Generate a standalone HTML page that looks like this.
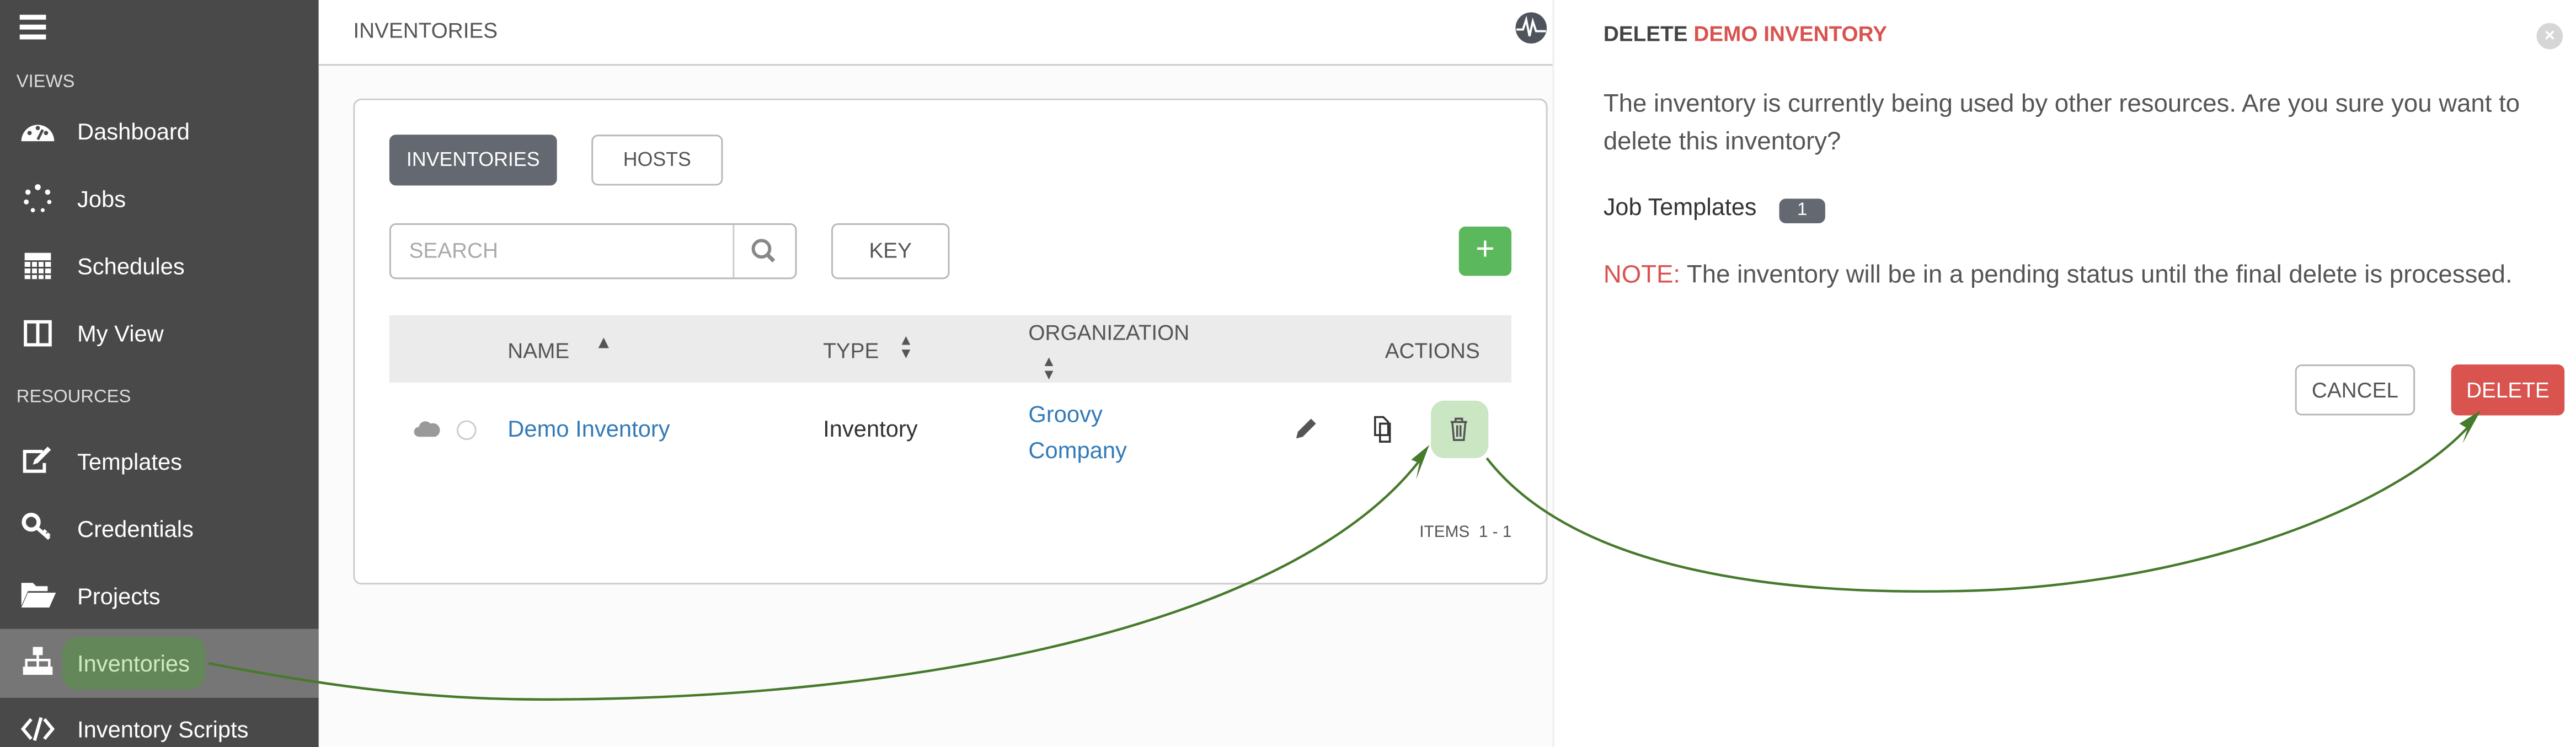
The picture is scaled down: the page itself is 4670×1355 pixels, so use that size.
<!DOCTYPE html>
<html><head><meta charset="utf-8"><style>
*{margin:0;padding:0;box-sizing:border-box}
html,body{width:4670px;height:1354px;overflow:hidden;background:#fff}
#w{position:absolute;left:0;top:0;width:1568px;height:455px;transform:scale(2.97832);transform-origin:0 0;font-family:"Liberation Sans",sans-serif}
.a{position:absolute;white-space:nowrap}
.side{position:absolute;left:0;top:0;width:194px;height:455px;background:#494949}
.nav{position:absolute;left:47px;color:#fff;font-size:14px}
.sec{position:absolute;left:10px;color:#ddd;font-size:11px}
.ic{position:absolute;left:12px;width:22px;height:18px}
.main{position:absolute;left:194px;top:0;width:751px;height:455px;background:#fbfbfb}
.btn{position:absolute;border:1px solid #b8b8b8;border-radius:4px;background:#fff;color:#555;font-size:12px;text-align:center}
</style></head><body><div id="w">
<div class="side">
 <div class="a" style="left:12px;top:9px;width:16px;height:3px;background:#fff;box-shadow:0 6px 0 #fff,0 12px 0 #fff"></div>
 <div class="sec" style="top:44px">VIEWS</div>
 <svg class="ic" style="top:71px" viewBox="0 0 22 18"><path d="M1 15A10 10 0 0 1 21 15Z" fill="#fff"/><circle cx="6" cy="10" r="1.3" fill="#494949"/><circle cx="11" cy="7" r="1.3" fill="#494949"/><circle cx="16" cy="10" r="1.3" fill="#494949"/><path d="M11 14L14 8" stroke="#494949" stroke-width="1.6"/></svg>
 <div class="nav" style="top:72px">Dashboard</div>
 <svg class="ic" style="top:112px" viewBox="0 0 22 18" fill="#fff"><circle cx="11" cy="2" r="1.8"/><circle cx="17" cy="5" r="1.6"/><circle cx="18" cy="11" r="1.3"/><circle cx="14" cy="16" r="1.2"/><circle cx="8" cy="16" r="1.3"/><circle cx="4" cy="11" r="1.5"/><circle cx="5" cy="5" r="1.6"/></svg>
 <div class="nav" style="top:113px">Jobs</div>
 <svg class="ic" style="top:152px" viewBox="0 0 22 18"><rect x="3" y="2" width="16" height="16" fill="#fff"/><path d="M3 7H19M3 11H19M3 15H19M7 7V18M11 7V18M15 7V18" stroke="#494949" stroke-width="1"/></svg>
 <div class="nav" style="top:154px">Schedules</div>
 <svg class="ic" style="top:194px" viewBox="0 0 22 18"><rect x="3.5" y="2" width="15" height="14" fill="none" stroke="#fff" stroke-width="2"/><path d="M11 2V16" stroke="#fff" stroke-width="2"/></svg>
 <div class="nav" style="top:195px">My View</div>
 <div class="sec" style="top:236px">RESOURCES</div>
 <svg class="ic" style="top:271px" viewBox="0 0 22 18"><path d="M14 4H3V16H15V11" fill="none" stroke="#fff" stroke-width="2"/><path d="M8 12L9 9L17 1L19 3L11 11Z" fill="#fff"/></svg>
 <div class="nav" style="top:273px">Templates</div>
 <svg class="ic" style="top:312px" viewBox="0 0 22 18"><circle cx="7" cy="6" r="4.5" fill="none" stroke="#fff" stroke-width="2.5"/><path d="M10 9L18 16M14 13L16 11M16 15L18 13" stroke="#fff" stroke-width="2.2"/></svg>
 <div class="nav" style="top:314px">Credentials</div>
 <svg class="ic" style="top:353px" viewBox="0 0 22 18"><path d="M1 2H8L10 4H17V7H5L1 16Z" fill="#fff"/><path d="M5 8H22L18 17H1Z" fill="#fff"/></svg>
 <div class="nav" style="top:355px">Projects</div>
 <div class="a" style="left:0;top:383px;width:194px;height:42px;background:#767676"></div>
 <svg class="ic" style="top:394px" viewBox="0 0 22 18" fill="#fff"><rect x="8" y="0" width="6" height="5"/><rect x="2" y="12" width="6" height="5"/><rect x="8" y="12" width="6" height="5"/><rect x="14" y="12" width="6" height="5"/><path d="M11 5V12M4 12V8H18V12" stroke="#fff" stroke-width="1.5" fill="none"/></svg>
 <div class="a" style="left:38px;top:388px;width:87px;height:32px;border-radius:9px;background:#64875a"></div>
 <div class="nav" style="top:396px;color:#cfeac0">Inventories</div>
 <svg class="ic" style="top:435px" viewBox="0 0 22 18"><path d="M7 3L2 9L7 15M15 3L20 9L15 15M13 2L9 16" stroke="#fff" stroke-width="2" fill="none"/></svg>
 <div class="nav" style="top:436px">Inventory Scripts</div>
</div>
<div class="main">
 <div class="a" style="left:0;top:0;width:751px;height:40px;background:#fff;border-bottom:1px solid #ccc"></div>
 <div class="a" style="left:21px;top:11px;font-size:13px;color:#555">INVENTORIES</div>
 <svg class="a" style="left:728px;top:7px" width="20" height="20" viewBox="0 0 20 20"><circle cx="10" cy="10" r="9.5" fill="#4f535b"/><path d="M1 11H5L7 5L9 15L11 6L13 12H19" stroke="#fff" stroke-width="1.3" fill="none"/></svg>
 <div class="a" style="left:21px;top:60px;width:727px;height:296px;background:#fff;border:1px solid #ccc;border-radius:5px"></div>
 <div class="btn" style="left:43px;top:82px;width:102px;height:31px;background:#646870;border-color:#646870;color:#fff;line-height:29px">INVENTORIES</div>
 <div class="btn" style="left:166px;top:82px;width:80px;height:31px;line-height:29px">HOSTS</div>
 <div class="btn" style="left:43px;top:136px;width:248px;height:34px;text-align:left;line-height:32px;padding-left:11px;color:#aaa;font-size:13px">SEARCH</div>
 <div class="a" style="left:252px;top:137px;width:1px;height:32px;background:#ccc"></div>
 <svg class="a" style="left:263px;top:145px" width="16" height="16" viewBox="0 0 16 16"><circle cx="6.5" cy="6.5" r="5" fill="none" stroke="#888" stroke-width="2"/><path d="M10 10L14 14" stroke="#888" stroke-width="2.4"/></svg>
 <div class="btn" style="left:312px;top:136px;width:72px;height:34px;line-height:32px;font-size:13px">KEY</div>
 <div class="a" style="left:694px;top:138px;width:32px;height:30px;background:#5cb85c;border-radius:4px;color:#fff;font-size:20px;text-align:center;line-height:29px">+</div>
 <div class="a" style="left:43px;top:192px;width:683px;height:41px;background:#ebebeb"></div>
 <div class="a" style="left:115px;top:206px;font-size:13px;color:#555">NAME</div>
 <div class="a" style="left:168px;top:203px;font-size:11px;color:#555">▲</div>
 <div class="a" style="left:307px;top:206px;font-size:13px;color:#555">TYPE</div>
 <div class="a" style="left:353px;top:203px;font-size:9px;color:#555;line-height:8px">▲<br>▼</div>
 <div class="a" style="left:432px;top:195px;font-size:13px;color:#555">ORGANIZATION</div>
 <div class="a" style="left:440px;top:216px;font-size:9px;color:#555;line-height:8px">▲<br>▼</div>
 <div class="a" style="left:649px;top:206px;font-size:13px;color:#555">ACTIONS</div>
 <svg class="a" style="left:58px;top:255px" width="16" height="12" viewBox="0 0 16 12"><path d="M3 11A3 3 0 0 1 3 5A4 4 0 0 1 10 3A3.5 3.5 0 0 1 13 11Z" fill="#9a9a9a"/></svg>
 <div class="a" style="left:84px;top:256px;width:12px;height:12px;border:1.5px solid #ccc;border-radius:50%"></div>
 <div class="a" style="left:115px;top:253px;font-size:14px;color:#337ab7">Demo Inventory</div>
 <div class="a" style="left:307px;top:253px;font-size:14px;color:#333">Inventory</div>
 <div class="a" style="left:432px;top:241px;font-size:14px;color:#337ab7;line-height:22px">Groovy<br>Company</div>
 <svg class="a" style="left:593px;top:253px" width="16" height="16" viewBox="0 0 16 16"><path d="M2 14L3 10L11 2L14 5L6 13Z" fill="#555"/></svg>
 <svg class="a" style="left:638px;top:252px" width="18" height="18" viewBox="0 0 18 18"><path d="M5 2H10L13 5V13H5Z M8 6H14V17H8Z" fill="none" stroke="#333" stroke-width="1.2"/></svg>
 <div class="a" style="left:677px;top:244px;width:35px;height:35px;background:#cbe6c3;border-radius:8px"></div>
 <svg class="a" style="left:687px;top:253px" width="14" height="16" viewBox="0 0 14 16"><path d="M2 4H12M5 4V2H9V4M3 4L4 15H10L11 4M6 6V13M8 6V13" stroke="#555" stroke-width="1.2" fill="none"/></svg>
 <div class="a" style="left:670px;top:319px;font-size:10px;color:#555">ITEMS&nbsp; 1 - 1</div>
</div>
<div class="a" style="left:945px;top:0;width:1px;height:455px;background:#eee"></div>
<div class="a" style="left:976px;top:13px;font-size:13px;font-weight:bold;color:#444">DELETE <span style="color:#d9534f">DEMO INVENTORY</span></div>
<div class="a" style="left:1544px;top:14px;width:16px;height:16px;border-radius:50%;background:#d6d6d6;color:#fff;font-size:11px;text-align:center;line-height:16px;font-weight:bold">×</div>
<div class="a" style="left:976px;top:52px;font-size:15.3px;color:#555;line-height:23px">The inventory is currently being used by other resources. Are you sure you want to<br>delete this inventory?</div>
<div class="a" style="left:976px;top:119px;font-size:14.5px;color:#333">Job Templates</div>
<div class="a" style="left:1083px;top:121px;width:28px;height:15px;border-radius:4px;background:#646870;color:#fff;font-size:11px;text-align:center;line-height:15px">1</div>
<div class="a" style="left:976px;top:159px;font-size:15.3px;color:#555"><span style="color:#d9534f">NOTE:</span> The inventory will be in a pending status until the final delete is processed.</div>
<div class="btn" style="left:1397px;top:222px;width:73px;height:31px;line-height:29px;font-size:13px">CANCEL</div>
<div class="a" style="left:1492px;top:222px;width:69px;height:31px;border-radius:4px;background:#d9534f;color:#fff;font-size:13px;text-align:center;line-height:31px">DELETE</div>
<svg class="a" style="left:0;top:0" width="1568" height="455" viewBox="0 0 1568 455">
 <path d="M127 404C200 418 260 426 330 426C560 426 790 380 866 278" fill="none" stroke="#467a2c" stroke-width="1.5"/>
 <path d="M870 271L859 280L864 282L862 292Z" fill="#467a2c"/>
 <path d="M905 279C960 350 1090 362 1190 360C1330 358 1460 310 1506 256" fill="none" stroke="#467a2c" stroke-width="1.5"/>
 <path d="M1510 250L1497 258L1502 261L1499 270Z" fill="#467a2c"/>
</svg>
</div></body></html>
